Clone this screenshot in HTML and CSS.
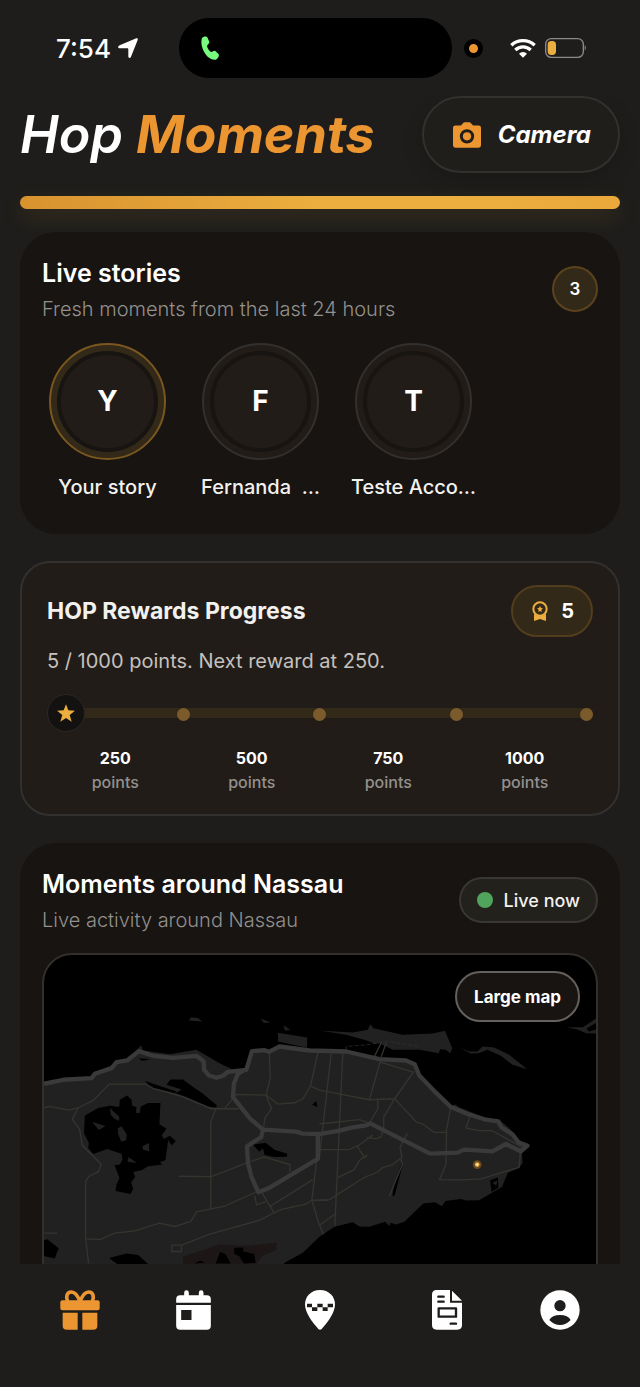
FILE: index.html
```html
<!DOCTYPE html>
<html lang="en">
<head>
    <meta charset="UTF-8">
    <meta name="viewport" content="width=device-width, initial-scale=1.0">

    <title>Hop Moments</title>
    <link rel="stylesheet" href="styles.css">
</head>
<body>
    <div class="status-bar">
        <div class="status-time">
            <span>7:54</span>
            <svg width="20" height="20" viewBox="0 0 60 60" fill="currentColor">
                <path d="M55 1c4-1 5 2 4 5L39 56c-2 5-8 5-8-1V35c0-3-1-4-4-4H6c-7 0-7-6-1-9z"/>
            </svg>
        </div>
        <div class="island">
            <svg width="18" height="25" viewBox="0 0 54 75" fill="#78fa7c">
                <path d="M3 6c4-6 14-6 16-2l6 14c1 4-7 9-7 12 1 7 7 16 12 18 4 1 9-5 13-3l10 10c3 4-3 14-9 16C18 76-6 32 3 6z"/>
            </svg>
        </div>
        <span class="mic-dot"></span>
        <div class="status-icons">
            <svg width="26" height="20" viewBox="0 0 78 60" fill="none" stroke="#fff" stroke-width="10">
                <path d="M4 22a51 51 0 0 1 70 0"/>
                <path d="M16 36a33 33 0 0 1 46 0"/>
                <path d="M39 59L27 47a17 17 0 0 1 24 0z" fill="#fff" stroke="none"/>
            </svg>
            <svg width="42" height="20" viewBox="0 0 126 60">
                <rect x="2" y="2" width="113" height="56" rx="17" fill="none" stroke="#8b8a89" stroke-width="4"/>
                <rect x="8" y="9" width="25" height="42" rx="11" fill="#ecae3f"/>
                <path d="M119 21q7 8 0 17z" fill="#8b8a89"/>
            </svg>
        </div>
    </div>

    <main class="content">
        <header class="header">
            <h1>Hop <span>Moments</span></h1>
            <button class="camera-btn" type="button">
                <svg width="28" height="26" viewBox="0 0 82 74">
                    <path fill="#ec9632" fill-rule="evenodd" d="M7 9h16l7-7q2-2 4-2h14q2 0 4 2l7 7h16q7 0 7 7v51q0 7-7 7H7q-7 0-7-7V16q0-7 7-7zm34 11a21 21 0 1 0 0 42 21 21 0 0 0 0-42z"/>
                    <circle cx="41" cy="41" r="12" fill="#ec9632"/>
                </svg>
                Camera
            </button>
        </header>

        <div class="divider"></div>

        <!-- Stories -->
        <section class="card">
            <div class="card-head">
                <div>
                    <h2>Live stories</h2>
                    <p>Fresh moments from the last 24 hours</p>
                </div>
                <span class="count">3</span>
            </div>
            <div class="stories">
                <button class="story own" type="button">
                    <span class="ring"><span class="avatar">Y</span></span>
                    <span class="story-name">Your story</span>
                </button>
                <button class="story" type="button">
                    <span class="ring"><span class="avatar">F</span></span>
                    <span class="story-name">Fernanda &nbsp;…</span>
                </button>
                <button class="story" type="button">
                    <span class="ring"><span class="avatar">T</span></span>
                    <span class="story-name">Teste Acco…</span>
                </button>
            </div>
        </section>

        <!-- Rewards -->
        <section class="card rewards">
            <div class="card-head">
                <h2>HOP Rewards Progress</h2>
                <span class="points-pill">
                    <svg width="16" height="20" viewBox="0 0 48 60" fill="#ecae3f">
                        <circle cx="24" cy="24" r="20" fill="none" stroke="#ecae3f" stroke-width="6"/>
                        <path d="M24 15l3 6 6 1-5 4 1 7-5-3-5 3 1-7-5-4 6-1z"/>
                        <path d="M6 39q18 14 36 0v21l-18-6-18 6z"/>
                    </svg>
                    5
                </span>
            </div>
            <p class="reward-text">5 / 1000 points. Next reward at 250.</p>
            <div class="progress">
                <div class="track">
                    <span class="dot"></span>
                    <span class="dot"></span>
                    <span class="dot"></span>
                    <span class="dot"></span>
                </div>
                <span class="thumb">
                    <svg width="18" height="18" viewBox="0 0 54 52" fill="#ecae3f">
                        <path d="M27 0l7 18 20 1-16 13 6 20-17-11-17 11 6-20L0 19l20-1z"/>
                    </svg>
                </span>
            </div>
            <div class="steps">
                <div><b>250</b><span>points</span></div>
                <div><b>500</b><span>points</span></div>
                <div><b>750</b><span>points</span></div>
                <div><b>1000</b><span>points</span></div>
            </div>
        </section>

        <!-- Map -->
        <section class="card">
            <div class="card-head">
                <div>
                    <h2>Moments around Nassau</h2>
                    <p>Live activity around Nassau</p>
                </div>
                <span class="live-pill"><i></i>Live now</span>
            </div>
            <div class="map">
                <svg viewBox="72 -135 1659 1065" preserveAspectRatio="xMidYMin slice">
                    <!-- land -->
                    <g fill="#212121">
                        <path d="M72 250L130 240 215 235 225 222 275 205 290 187 322 182 350 152 364 136 369 152 450 163 530 150 548 160 600 190 640 210 675 210 697 155 740 152 780 138 870 152 980 150 1090 180 1165 179 1190 195 1200 225 1214 245 1228 248 1245 276 1282 308 1290 320 1308 314 1318 322 1400 355 1440 360 1470 385 1500 425 1531 435 1509 460 1510 492 1498 506 1466 520 1448 562 1380 602 1340 603 1325 598 1278 604 1268 620 1248 608 1212 612 1155 667 1130 675 1113 670 1111 680 1097 667 1050 682 1020 681 1000 668 945 682 900 712 850 760 795 790 700 930 72 930z"/>
                        <path d="M507 62l7-10 20 2 14 11z"/>
                        <path d="M723 56l30 12-20 1z"/>
                        <path d="M792 76l20 14-16 2z"/>
                        <path d="M775 99l88 14v31l-88-19z"/>
                        <path d="M905 93L1000 98 1045 90 1053 73 1062 85 1150 105 1240 101 1277 93 1299 145 1293 160 1280 150 1262 148 1259 160 1200 150 1120 150 1080 130 1065 132 1040 121 980 105z"/>
                        <path d="M1320 144L1350 155 1375 155 1390 140 1425 143 1470 165 1524 208 1480 195 1445 168 1405 150 1378 160 1355 161z"/>
                        <path d="M1642 82h50l39-26v45l-30-1-25-11z"/>
                    </g>
                    <g fill="#000">
                        <path d="M1702 86l29-17v20l-21 6z"/>
                        <path d="M195 347L235 325 270 318 298 322 300 300 322 287 335 300 337 318 350 322 348 340 360 340 363 320 385 310 422 310 419 374 440 387 426 407 432 418 450 408 468 424 456 437 445 422 437 482 420 488 428 495 385 500 365 512 340 517 346 532 334 548 340 568 332 583 287 574 290 555 299 535 284 497 300 495 308 480 305 462 262 448 220 463 205 445 207 430 192 400z"/>
                        <path d="M376 243L400 252 470 275 465 280 410 268 390 262z"/>
                        <path d="M440 255L452 239 490 239 520 262 545 278 592 317 588 323 565 320 500 292 450 275 470 279 486 269z"/>
                        <path d="M358 175l20 2 12 3-25 3z"/>
                        <path d="M700 435L738 429 765 450 803 462 802 471 765 472 735 466 730 446 719 456z"/>
                        <path d="M878 315l12-11 4 18z"/>
                        <path d="M72 722l10-3 34 27-12 31-32-7z"/>
                        <path d="M268 776l52-14 35 5 30 27H292z"/>
                        <path d="M1147 490l4 2-25 95-7 3 5-35z"/>
                        <path d="M1413 542l23-8 2 30-21 13z"/>
                    </g>
                    <g fill="#212121">
                        <path d="M270 325l28 26v12l-12-4-13-13z"/>
                        <path d="M216 366l41 13-20 12z"/>
                        <path d="M294 386l11-6 16 25-2 17-15 4-10-25z"/>
                        <path d="M368 440l20-10 0 25-18-5z"/>
                        <path d="M326 472l25 18-28-4z"/>
                        <path d="M1420 550l15-8-4 16z"/>
                    </g>
                    <path fill="#1c1716" d="M490 772L600 735 680 739 772 730 770 752 728 770 710 795 490 795z"/>
                    <path fill="#000" d="M601 757l16 7 16 28h-45zM643 745l29-1-2 11 34 9 4 26-35 2-15-22-14-6zM525 792l16-9 16 7z"/>

                    <!-- minor roads -->
                    <g fill="none" stroke="#35342f" stroke-width="4">
                        <path d="M72 325L88 320 148 331 175 324 220 302 268 253H378L400 266 480 288 575 327H657"/>
                        <path d="M175 324L157 359 179 389 187 437 244 494 235 517 207 530 197 546V717L206 792"/>
                        <path d="M199 718L241 720 284 701 345 694 419 671 465 681 513 666 530 637 615 620 708 578"/>
                        <path d="M588 328L573 368V625M478 530L575 531 678 491 732 472 811 495V517"/>
                        <path d="M484 738L570 704 720 662 783 630 859 614 877 602H927M456 737h29v19h-29z"/>
                        <path d="M705 588l6 28 28-10M727 580l37 60M752 620l128-80M72 701h39"/>
                        <path d="M749 156L752 236 739 286 756 327 736 355 732 383M615 326L650 284 740 286 775 313 825 309 850 297 873 258 896 155"/>
                        <path d="M873 258l27 14M893 470l-16 132 23 76"/>
                        <path d="M900 271l150 29 76-3 56-80-100-30-32 113M1126 297l65 70 20 6 33 25h37"/>
                        <path d="M1075 302v25l-23 40M1126 297l-33 55v35l-8 25-15 5-30-3M900 450h88l32-14 40-30M1012 438l22 34 10-6"/>
                        <path d="M935 162l-35 310M970 160l-24 520M900 373l120-13 30 10"/>
                        <path d="M953 535l50-24 20-32 20-10M900 602l30-2 105-67 38-15 17-14 30-9 28-22-6-30 22-42M1142 475l8 17-40 98"/>
                        <path d="M1294 325l-12 65-2 105-19 45 67 1 57-3 115-35 4-50M1352 350l-12 35 38 8 40 0 92 50"/>
                        <path d="M900 677l45-32M900 677l12 27M1085 130l-20 40M1100 130l-15 42"/>
                        <path d="M980 150v-10l60-5 65-10 95 15" stroke-width="2" stroke-dasharray="12 6"/>
                    </g>

                    <!-- main roads -->
                    <g fill="none" stroke="#3a3a3a" stroke-width="13" stroke-linejoin="round">
                        <path d="M72 252L130 240 215 235 225 222 275 205 290 187 322 182 357 154 400 168 460 174 530 168 552 185 553 210 568 227 590 234 610 228 625 216 680 210 697 154 735 151 748 156 780 140 870 152 980 155 1080 178 1160 182 1186 193 1200 227 1245 274 1295 322 1345 343 1400 360 1437 365 1447 383 1480 404 1498 428 1525 438 1505 455 1460 433 1420 455 1335 450 1315 459 1232 462 1052 371 1040 377 1000 383 960 393 900 403 850 402 830 396 730 390 690 355 640 292 643 250 655 222 675 210"/>
                        <path d="M730 390L725 412 682 440 685 490 695 530 716 578 745 567 895 478V403"/>
                    </g>
                    <circle cx="1374" cy="495" r="13" fill="#6b4a20"/>
                    <circle cx="1374" cy="495" r="7" fill="#ecae3f"/>
                    <circle cx="1374" cy="495" r="3" fill="#fff"/>
                </svg>
                <button class="map-btn" type="button">Large map</button>
            </div>
        </section>
    </main>

    <nav class="tab-bar">
        <a class="active" href="#" aria-label="Rewards">
            <svg width="40" height="40" viewBox="0 0 118 120" fill="currentColor">
                <rect y="31" width="118" height="30" rx="6"/>
                <path d="M7 68h45v51H19q-12 0-12-12zM66 68h45v39q0 12-12 12H66z"/>
                <path d="M59 34C50 12 42 6 33 6 19 6 16 21 22 34M59 34C68 12 76 6 85 6c14 0 17 15 11 28" fill="none" stroke="currentColor" stroke-width="11"/>
            </svg>
        </a>
        <a href="#" aria-label="Events">
            <svg width="35" height="40" viewBox="0 0 104 120" fill="currentColor">
                <path d="M12 16h12V8q0-7 7-7t7 7v8h30V8q0-7 7-7t7 7v8h10q12 0 12 12v10H0V28q0-12 12-12z"/>
                <path fill-rule="evenodd" d="M0 45h104v62q0 12-12 12H12q-12 0-12-12zm15 15v30h31V60z"/>
            </svg>
        </a>
        <a href="#" aria-label="Rides">
            <svg width="30" height="40" viewBox="0 0 90 120">
                <path fill="currentColor" d="M45 0C19 0 0 19 0 43c0 26 22 54 40 74q5 4 10 0c18-20 40-48 40-74C90 19 71 0 45 0z"/>
                <path fill="#1e1d1b" d="M6 41h15v11H6zM21 52h16v11H21zM37 41h16v11H37zM53 52h15v11H53zM68 41h16v11H68z"/>
            </svg>
        </a>
        <a href="#" aria-label="News">
            <svg width="30" height="40" viewBox="0 0 90 120">
                <path fill="currentColor" d="M14 0h40v38h36v67q0 14-14 14H14q-14 0-14-14V14Q0 0 14 0zM60 2l30 30H60z"/>
                <path fill="none" stroke="#1e1d1b" stroke-width="7" stroke-linecap="round" stroke-linejoin="round" d="M19 20h16M19 35h16M20 55h52v25H20zM56 101h16"/>
            </svg>
        </a>
        <a href="#" aria-label="Profile">
            <svg width="40" height="40" viewBox="0 0 118 120">
                <circle cx="59" cy="60" r="59" fill="currentColor"/>
                <circle cx="59" cy="47" r="17" fill="#1e1d1b"/>
                <path fill="#1e1d1b" d="M27 90q8-15 32-15t32 15q-14 15-32 15T27 90z"/>
            </svg>
        </a>
    </nav>
</body>
</html>
```
FILE: styles.css
```css
        * {
            box-sizing: border-box;
        }
        body {
            margin: 0;
            height: 100vh;
            display: flex;
            flex-direction: column;
            background-color: #1e1d1b;
            color: #fff;
            font-family: Inter, "Open Sans", sans-serif;
        }
        h1, h2, p {
            margin: 0;
        }
        svg {
            display: block;
            flex-shrink: 0;
        }
        button {
            font-family: inherit;
            color: inherit;
            cursor: pointer;
        }

        /* status bar */
        .status-bar {
            display: flex;
            align-items: center;
            height: 96px;
            padding: 0 53px 0 56px;
            flex-shrink: 0;
        }
        .status-time {
            display: flex;
            align-items: center;
            gap: 7px;
            width: 123px;
            font-size: 26px;
            font-weight: 500;
        }
        .island {
            display: flex;
            align-items: center;
            flex: 0 1 273px;
            height: 60px;
            padding-left: 22px;
            border-radius: 30px;
            background-color: #000;
        }
        .mic-dot {
            width: 19px;
            height: 19px;
            margin-left: 12px;
            border: 5px solid #000;
            border-radius: 50%;
            background-color: #ec9632;
        }
        .status-icons {
            display: flex;
            gap: 9px;
            margin-left: auto;
        }

        .content {
            flex: 1;
            min-height: 0;
            padding: 0 20px 20px;
            overflow-y: auto;
            scrollbar-width: none;
        }

        .header {
            display: flex;
            align-items: center;
            justify-content: space-between;
        }
        .header h1 {
            font-size: 52px;
            font-weight: 600;
            font-style: italic;
            line-height: 76px;
            white-space: nowrap;
        }
        .header h1 span {
            font-weight: 700;
            color: #ec9632;
        }
        .camera-btn {
            display: flex;
            align-items: center;
            gap: 17px;
            height: 77px;
            padding: 0 27px 0 29px;
            border: 2px solid #32312f;
            border-radius: 39px;
            background-color: #1f1e1b;
            box-shadow: 0 8px 20px rgba(0, 0, 0, 0.15);
            font-size: 24px;
            font-weight: 700;
            font-style: italic;
        }
        .divider {
            height: 13px;
            margin: 23px 0;
            border-radius: 7px;
            background: linear-gradient(90deg, #d8932f, #ecae3f 50%, #ecae3f 80%, #eba83b);
            box-shadow: 0 8px 22px rgba(236, 174, 63, 0.14);
        }

        /* cards */
        .card {
            padding: 23px 22px 33px;
            margin-bottom: 27px;
            border-radius: 36px;
            background-color: #171411;
        }
        .card-head {
            display: flex;
            align-items: center;
            justify-content: space-between;
        }
        .card-head h2 {
            font-size: 25px;
            font-weight: 600;
            line-height: 36px;
        }
        .card-head p {
            margin-top: 4px;
            font-size: 20px;
            font-weight: 300;
            line-height: 28px;
            color: #93908d;
        }
        .count {
            width: 46px;
            height: 46px;
            border: 2px solid #5b431e;
            border-radius: 50%;
            background-color: #332919;
            font-size: 17px;
            font-weight: 600;
            line-height: 42px;
            text-align: center;
        }

        .stories {
            display: flex;
            gap: 22px;
            margin-top: 20px;
        }
        .story {
            display: flex;
            flex-direction: column;
            align-items: center;
            gap: 13px;
            width: 131px;
            padding: 0;
            border: none;
            background: none;
        }
        .ring {
            width: 117px;
            height: 117px;
            padding: 6px;
            border: 2px solid #32302e;
            border-radius: 50%;
            background-color: #211c18;
        }
        .own .ring {
            border-color: #79571f;
            background-color: #332919;
        }
        .avatar {
            display: block;
            height: 101px;
            border: 4px solid #171411;
            border-radius: 50%;
            background-color: #211c18;
            font-size: 28px;
            font-weight: 700;
            line-height: 93px;
        }
        .story-name {
            font-size: 20px;
            font-weight: 500;
            line-height: 28px;
            white-space: nowrap;
            color: #f3f1ee;
        }

        /* rewards */
        .rewards {
            padding: 22px 25px 20px;
            border: 2px solid #32312f;
            border-radius: 30px;
            background-color: #211c18;
        }
        .rewards h2 {
            font-size: 23px;
            font-weight: 700;
            color: #f3f1ee;
        }
        .points-pill {
            display: flex;
            align-items: center;
            gap: 13px;
            height: 52px;
            padding: 0 17px 0 19px;
            border: 2px solid #523d1c;
            border-radius: 26px;
            background-color: #332919;
            font-size: 20px;
            font-weight: 700;
        }
        .reward-text {
            margin-top: 9px;
            font-size: 20px;
            line-height: 30px;
            color: #c4c1be;
        }
        .progress {
            position: relative;
            display: flex;
            align-items: center;
            height: 38px;
            margin-top: 18px;
        }
        .track {
            display: grid;
            grid-template-columns: repeat(4, 1fr);
            align-items: center;
            width: 100%;
            height: 10px;
            border-radius: 5px;
            background-color: #332919;
        }
        .dot {
            width: 13px;
            height: 13px;
            margin-right: -6px;
            border-radius: 50%;
            background-color: #7b5b2c;
            justify-self: end;
        }
        .dot:last-child {
            margin-right: 0;
        }
        .thumb {
            position: absolute;
            left: 0;
            top: 0;
            display: flex;
            align-items: center;
            justify-content: center;
            width: 38px;
            height: 38px;
            border: 1px solid #2a2826;
            border-radius: 50%;
            background-color: #131210;
        }
        .steps {
            display: grid;
            grid-template-columns: repeat(4, 1fr);
            margin-top: 14px;
            font-size: 16px;
            line-height: 24px;
            text-align: center;
        }
        .steps b, .steps span {
            display: block;
        }
        .steps span {
            font-weight: 500;
            color: #93908d;
        }

        /* map */
        .live-pill {
            display: flex;
            align-items: center;
            gap: 11px;
            height: 46px;
            padding: 0 16px;
            border: 2px solid #383734;
            border-radius: 23px;
            background-color: #22211c;
            font-size: 18px;
            font-weight: 500;
            color: #f3f1ee;
        }
        .live-pill i {
            width: 16px;
            height: 16px;
            border-radius: 50%;
            background-color: #50a45b;
        }
        .map {
            position: relative;
            margin-top: 19px;
            border: 2px solid #32302d;
            border-radius: 30px;
            background-color: #000;
            overflow: hidden;
        }
        .map svg {
            width: 100%;
        }
        .map-btn {
            position: absolute;
            top: 16px;
            right: 16px;
            height: 51px;
            padding: 0 17px;
            border: 2px solid #64605d;
            border-radius: 26px;
            background-color: #171411;
            font-size: 17px;
            font-weight: 700;
        }

        .tab-bar {
            display: grid;
            grid-template-columns: 4fr 4fr 5fr 4fr 4fr;
            flex-shrink: 0;
            height: 123px;
            padding: 26px 24px 0;
        }
        .tab-bar a {
            display: flex;
            justify-content: center;
            align-items: flex-start;
            color: #fff;
        }
        .tab-bar .active {
            color: #ec9632;
        }
```
